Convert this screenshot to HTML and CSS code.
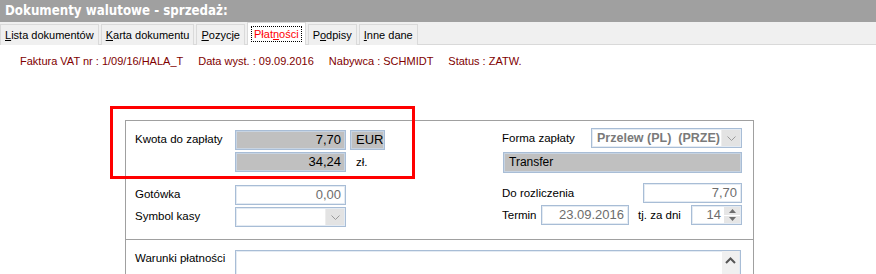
FILE: index.html
```html
<!DOCTYPE html>
<html lang="pl">
<head>
  <meta charset="UTF-8">
  <title>Dokumenty walutowe - sprzedaż</title>
  <link rel="stylesheet" href="styles.css">
</head>
<body>
  <div class="title">Dokumenty walutowe - sprzedaż:</div>

  <div class="tabs">
    <div class="tab"><u>L</u>ista dokumentów</div>
    <div class="tab"><u>K</u>arta dokumentu</div>
    <div class="tab"><u>P</u>ozycje</div>
    <div class="tab tab--active"><span class="tab__focus">Płat<u>n</u>ości</span></div>
    <div class="tab">P<u>o</u>dpisy</div>
    <div class="tab"><u>I</u>nne dane</div>
  </div>

  <div class="info">
    <span>Faktura VAT nr : 1/09/16/HALA_T</span>
    <span>Data wyst. : 09.09.2016</span>
    <span>Nabywca : SCHMIDT</span>
    <span>Status : ZATW.</span>
  </div>

  <div class="content">
    <div class="panel panel--main">
      <div class="col col--left">
        <div class="row">
          <div class="label">Kwota do zapłaty</div>
          <div class="field field--gray field--dark">7,70</div>
          <div class="field field--gray field--cur">EUR</div>
        </div>
        <div class="row row--tight">
          <div class="label"></div>
          <div class="field field--gray field--dark">34,24</div>
          <div class="unit">zł.</div>
        </div>
        <div class="row row--gap">
          <div class="label">Gotówka</div>
          <div class="field">0,00</div>
        </div>
        <div class="row row--tight">
          <div class="label">Symbol kasy</div>
          <div class="field field--combo">
            <span class="combo__text"></span>
            <span class="combo__btn">
              <svg width="9" height="5" viewBox="0 0 9 5"><polyline points="0.5,0.5 4.5,4.5 8.5,0.5" fill="none" stroke="#9a9a9a" stroke-width="1"/></svg>
            </span>
          </div>
        </div>
      </div>

      <div class="col col--right">
        <div class="rrow rrow--first">
          <div class="label">Forma zapłaty</div>
          <div class="field field--combo field--form">
            <span class="combo__text combo__text--bold">Przelew (PL)&nbsp; (PRZE)</span>
            <span class="combo__btn">
              <svg width="9" height="5" viewBox="0 0 9 5"><polyline points="0.5,0.5 4.5,4.5 8.5,0.5" fill="none" stroke="#9a9a9a" stroke-width="1"/></svg>
            </span>
          </div>
        </div>
        <div class="field field--gray field--dark field--left field--transfer">Transfer</div>
        <div class="rrow rrow--gap">
          <div class="label">Do rozliczenia</div>
          <div class="field field--settle">7,70</div>
        </div>
        <div class="rrow rrow--tight">
          <div class="label label--term">Termin</div>
          <div class="field field--date">23.09.2016</div>
          <div class="label label--days">tj. za dni</div>
          <div class="field field--spin">
            <span class="spin__value">14</span>
            <span class="spin__btns">
              <span class="spin__btn"><svg width="7" height="4" viewBox="0 0 7 4"><polygon points="3.5,0 7,4 0,4" fill="#6d6d6d"/></svg></span>
              <span class="spin__btn"><svg width="7" height="4" viewBox="0 0 7 4"><polygon points="0,0 7,0 3.5,4" fill="#6d6d6d"/></svg></span>
            </span>
          </div>
        </div>
      </div>
    </div>

    <div class="panel panel--terms">
      <div class="label">Warunki płatności</div>
      <div class="memo">
        <span class="memo__scroll">
          <svg width="11" height="7" viewBox="0 0 11 7"><polyline points="1,6 5.5,1.5 10,6" fill="none" stroke="#555" stroke-width="2"/></svg>
        </span>
      </div>
    </div>
  </div>

  <div class="highlight"></div>
</body>
</html>
```

FILE: styles.css
```css
html {
  background: #fff;
}

body {
  margin: 0;
  font-family: 'Liberation Sans', Arial, sans-serif;
  font-size: 11px;
  color: #000;
  overflow: hidden;
}

.title {
  height: 22px;
  background: #a0a0a0;
  color: #fff;
  font-family: 'DejaVu Sans Condensed', 'DejaVu Sans', sans-serif;
  font-stretch: condensed;
  font-weight: bold;
  font-size: 13.2px;
  line-height: 22px;
  padding-left: 5px;
}

.tabs {
  display: flex;
  height: 22px;
  background: #f0f0f0;
  border-bottom: 1px solid #d9d9d9;
  align-items: flex-end;
  gap: 2px;
}

.tab {
  height: 20px;
  line-height: 21px;
  padding: 0 4px;
  background: #f0f0f0;
  border: 1px solid #dadada;
  border-bottom: 0;
  margin-bottom: -1px;
  font-size: 11px;
}

.tab--active {
  height: 22px;
  background: #fff;
  color: #ff0000;
  padding: 0 3px;
  display: flex;
  align-items: center;
}

.tab__focus {
  border: 1px dotted #000;
  padding: 0 2px;
  line-height: 14px;
}

.info {
  display: flex;
  gap: 15px;
  padding: 9px 0 0 20px;
  line-height: 14px;
  color: #800000;
  font-size: 11px;
}

.content {
  margin: 52px 0 0 125px;
  width: 629px;
}

.panel {
  border: 1px solid #a0a0a0;
  box-sizing: border-box;
}

.panel--main {
  display: flex;
  height: 120px;
  padding: 7px 11px 0 9px;
}

.col--left {
  width: 250px;
  padding-top: 2px;
}

.col--right {
  width: 240px;
  margin-left: auto;
  display: flex;
  flex-direction: column;
}

.row {
  display: flex;
  align-items: center;
  height: 20px;
}

.row--tight {
  margin-top: 2px;
}

.row--gap {
  margin-top: 13px;
}

.label {
  width: 100px;
  line-height: 14px;
  font-size: 11.5px;
}

.row .label {
  align-self: flex-start;
  padding-top: 2px;
}

.field {
  width: 111px;
  height: 20px;
  box-sizing: border-box;
  border: 1px solid #a8bdd6;
  box-shadow: inset 0 0 0 1px #e4ebf3;
  background: #fff;
  color: #6d6d6d;
  font-size: 13px;
  line-height: 18px;
  text-align: right;
  padding-right: 4px;
  flex: none;
}

.field--gray {
  background: #c0c0c0;
  box-shadow: inset 0 0 0 1px #c8d4e2;
}

.field--dark {
  color: #000;
}

.field--cur {
  width: 35px;
  margin-left: 4px;
  color: #000;
  text-align: left;
  padding-left: 5px;
}

.unit {
  margin-left: 10px;
  font-size: 11.5px;
}

.field--left {
  text-align: left;
  padding-left: 5px;
  font-size: 12px;
}

.field--combo {
  display: flex;
  padding: 0;
}

.combo__text {
  flex: 1;
  text-align: left;
  padding-left: 5px;
}

.combo__text--bold {
  font-weight: bold;
  font-size: 12.5px;
  color: #7a7a7a;
}

.combo__btn {
  width: 18px;
  background: #e3e3e3;
  border-left: 1px solid #ededed;
  display: flex;
  align-items: center;
  justify-content: center;
  margin: 1px 1px 1px 0;
}

.rrow {
  display: flex;
  align-items: center;
  height: 20px;
}

.rrow .label {
  width: auto;
}

.field--form {
  width: 151px;
  margin-left: auto;
}

.field--transfer {
  width: 239px;
  height: 21px;
  margin: 4px 0 0 1px;
}

.rrow--gap {
  margin-top: 10px;
}

.rrow--tight {
  margin-top: 2px;
}

.field--settle {
  width: 99px;
  margin-left: auto;
}

.rrow .label--term {
  width: 39px;
}

.field--date {
  width: 88px;
}

.label--days {
  margin-left: 9px;
}

.field--spin {
  width: 51px;
  margin-left: auto;
  display: flex;
  padding: 0;
}

.spin__value {
  flex: 1;
  padding-right: 3px;
}

.spin__btns {
  width: 16px;
  display: flex;
  flex-direction: column;
  margin: 1px 1px 1px 0;
  gap: 1px;
  background: #fff;
}

.spin__btn {
  flex: 1;
  background: #e6e6e6;
  display: flex;
  align-items: center;
  justify-content: center;
}

.panel--terms {
  display: flex;
  border-top: 0;
  border-bottom: 0;
  height: 34px;
  padding: 10px 11px 0 9px;
}

.panel--terms .label {
  padding-top: 1px;
}

.memo {
  width: 506px;
  height: 24px;
  box-sizing: border-box;
  border: 1px solid #a8bdd6;
  border-bottom: 0;
  box-shadow: inset 1px 1px 0 #e4ebf3, inset -1px 0 0 #e4ebf3;
  display: flex;
  justify-content: flex-end;
}

.memo__scroll {
  width: 17px;
  margin-right: 1px;
  background: #f0f0f0;
  display: flex;
  justify-content: center;
  padding-top: 6px;
}

.highlight {
  position: absolute;
  left: 110px;
  top: 106px;
  width: 305px;
  height: 73px;
  box-sizing: border-box;
  border: 3px solid #ff0000;
}
```
